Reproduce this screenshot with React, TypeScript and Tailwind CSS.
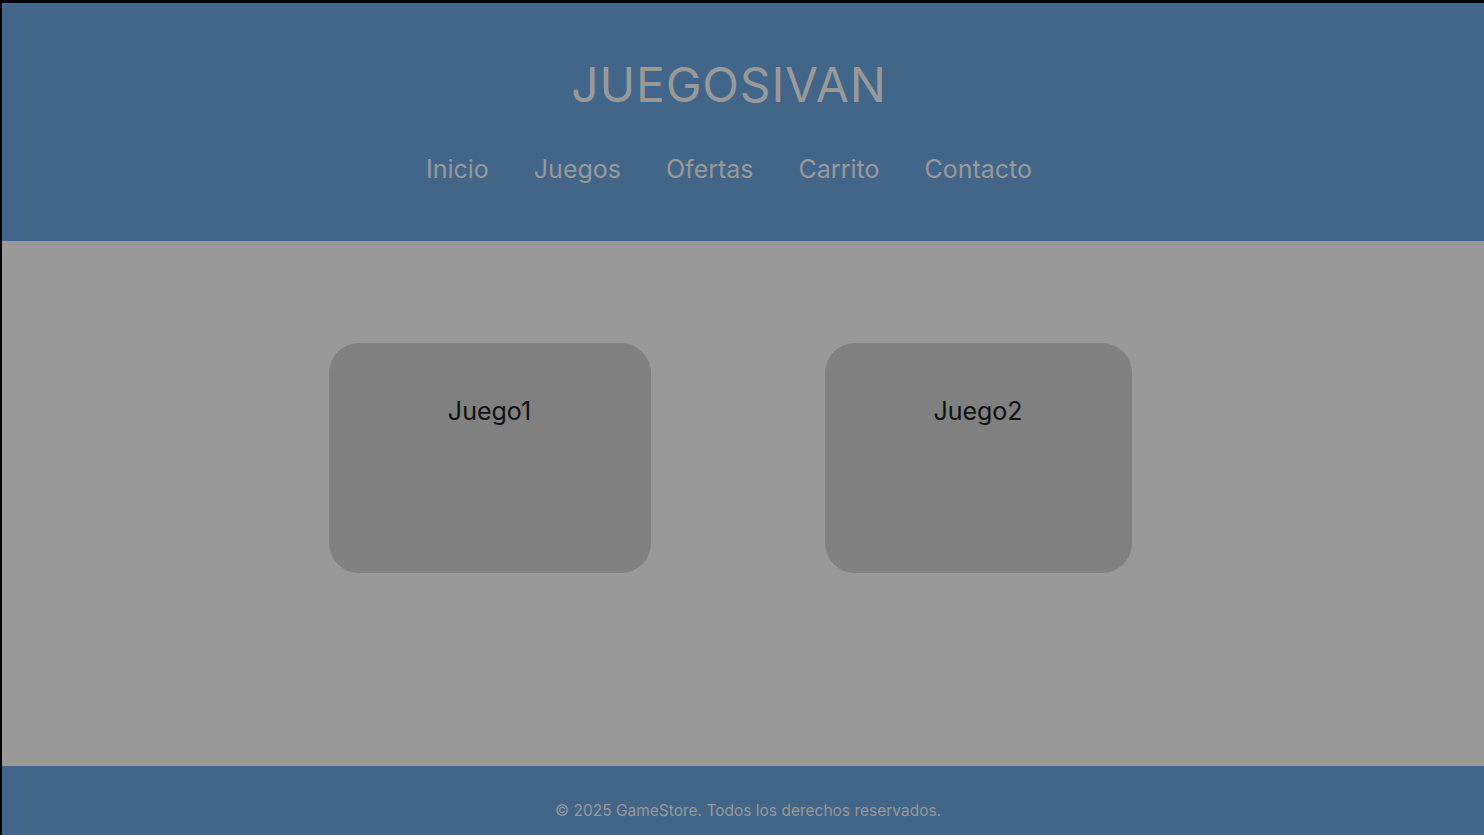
const links = ["Inicio", "Juegos", "Ofertas", "Carrito", "Contacto"];

const games = [
  { name: "Juego1", w: "w-[322px]" },
  { name: "Juego2", w: "w-[307px]" },
];

export default function App() {
  return (
    <div className="flex h-[835px] flex-col overflow-hidden border-l-2 border-t-[3px] border-black font-['Inter','Liberation_Sans',sans-serif]">
      <header className="flex h-[238px] flex-col items-center bg-[#41668a] pr-[28px] text-[#999999]">
        <h1 className="mt-[50px] text-[48px] font-normal leading-[64px] tracking-[0.8px]">JUEGOSIVAN</h1>
        <nav className="mt-[37px] flex gap-[45px] text-[25px] leading-[30px]">
          {links.map((l) => (
            <a key={l} href="#">
              {l}
            </a>
          ))}
        </nav>
      </header>

      <main className="flex h-[525px] justify-center gap-[174px] bg-[#999999] pr-[26px] pt-[102px]">
        {games.map((g) => (
          <div
            key={g.name}
            className={`h-[230px] ${g.w} rounded-[30px] bg-[#808080] pt-[53px] text-center text-[25px] leading-[30px] text-[#111111]`}
          >
            {g.name}
          </div>
        ))}
      </main>

      <footer className="flex flex-1 items-start justify-center bg-[#41668a] pl-[10px] pt-[35px] text-[15.5px] leading-[20px] text-[#999999]">
        © 2025 GameStore. Todos los derechos reservados.
      </footer>
    </div>
  );
}
